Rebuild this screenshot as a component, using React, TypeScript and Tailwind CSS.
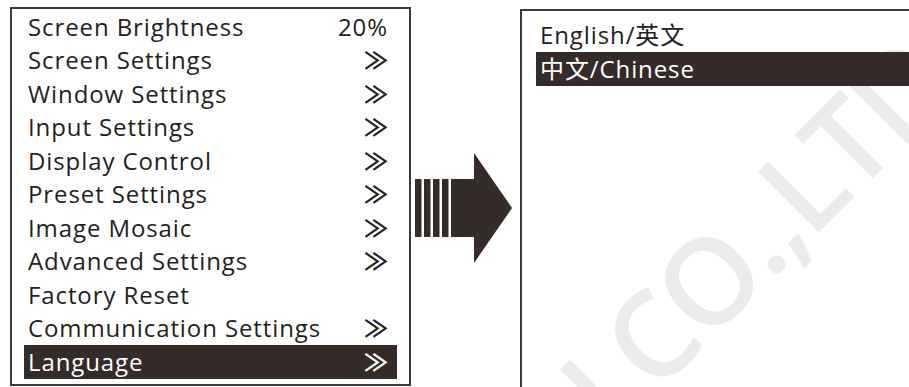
const leftItems: { label: string; value: string }[] = [
  { label: "Screen Brightness", value: "20%" },
  { label: "Screen Settings", value: "≫" },
  { label: "Window Settings", value: "≫" },
  { label: "Input Settings", value: "≫" },
  { label: "Display Control", value: "≫" },
  { label: "Preset Settings", value: "≫" },
  { label: "Image Mosaic", value: "≫" },
  { label: "Advanced Settings", value: "≫" },
  { label: "Factory Reset", value: "" },
  { label: "Communication Settings", value: "≫" },
  { label: "Language", value: "≫" },
];

const Arrow = () => (
  <svg width="101" height="110" viewBox="0 0 101 110" className="self-center">
    <rect x="4" y="26" width="6.5" height="58" fill="#352b29" />
    <rect x="13" y="26" width="6.5" height="58" fill="#352b29" />
    <rect x="22" y="26" width="6.5" height="58" fill="#352b29" />
    <rect x="31" y="26" width="6.5" height="58" fill="#352b29" />
    <polygon points="40,26 63,26 63,0 101,55 63,110 63,84 40,84" fill="#352b29" />
  </svg>
);

export default function App() {
  return (
    <div
      className="relative w-[909px] h-[387px] overflow-hidden bg-white text-[#231f20]"
      style={{ fontFamily: '"Open Sans", "Noto Sans CJK SC", sans-serif' }}
    >
      <div className="absolute left-[664px] top-[322px] -translate-x-1/2 -translate-y-1/2 -rotate-45 whitespace-nowrap text-[120px] font-semibold tracking-[-4px] leading-none text-[#ebebeb] pointer-events-none">
        TECH CO.,LTD
      </div>
      <div className="relative flex pl-[10px] pt-[7px]">
        <div className="w-[401px] h-[379px] border-2 border-[#3d3839] px-[12px] pt-[1px] shrink-0">
          {leftItems.map((item) => {
            const active = item.label === "Language";
            return (
              <div
                key={item.label}
                className={`flex items-center justify-between h-[33.5px] pl-[4px] pr-[9px] text-[24px] tracking-[0.9px] leading-none ${
                  active ? "bg-[#352b29] text-white" : ""
                }`}
              >
                <span>{item.label}</span>
                <span className={item.value === "≫" ? "font-semibold tracking-normal" : ""}>{item.value}</span>
              </div>
            );
          })}
        </div>
        <div className="w-[109px] flex shrink-0">
          <Arrow />
        </div>
        <div className="w-[420px] h-[400px] mt-[2px] border-2 border-[#3d3839] px-[14px] pt-[7px] shrink-0">
          <div className="flex items-center h-[34px] pl-[4px] text-[24px] tracking-[0.9px] leading-none">English/英文</div>
          <div className="flex items-center h-[34px] pl-[4px] text-[24px] tracking-[0.9px] leading-none bg-[#352b29] text-white">
            中文/Chinese
          </div>
        </div>
      </div>
    </div>
  );
}
